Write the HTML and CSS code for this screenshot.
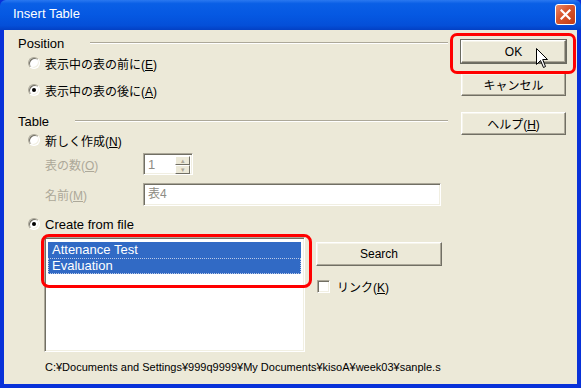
FILE: index.html
```html
<!DOCTYPE html>
<html lang="ja">
<head>
    <meta charset="UTF-8">
    <title>Insert Table</title>
    <link rel="stylesheet" href="styles.css">
</head>
<body>
    <div class="window">
        <div class="titlebar">
            <span class="title">Insert Table</span>
            <span class="close">
                <svg width="11" height="11" viewBox="0 0 11 11"><path d="M1.5 1.5 L9.5 9.5 M9.5 1.5 L1.5 9.5" stroke="#fff" stroke-width="2.2" stroke-linecap="square"/></svg>
            </span>
        </div>
        <div class="client">
            <div class="form">
                <div class="group-head"><span>Position</span><span class="rule"></span></div>
                <div class="option opt-before"><span class="radio"></span><span class="ja">表示中の表の前に(<u>E</u>)</span></div>
                <div class="option opt-after"><span class="radio checked"></span><span class="ja">表示中の表の後に(<u>A</u>)</span></div>

                <div class="group-head head-table"><span>Table</span><span class="rule"></span></div>
                <div class="option opt-new"><span class="radio"></span><span class="ja">新しく作成(<u>N</u>)</span></div>
                <div class="field field-count">
                    <span class="field-label ja">表の数(<u>O</u>)</span>
                    <div class="spin">
                        <span class="spin-value">1</span>
                        <span class="spin-buttons">
                            <span class="spin-btn">&#9652;</span>
                            <span class="spin-btn">&#9662;</span>
                        </span>
                    </div>
                </div>
                <div class="field field-name">
                    <span class="field-label ja">名前(<u>M</u>)</span>
                    <div class="textbox ja">表4</div>
                </div>
                <div class="option opt-file"><span class="radio checked"></span><span>Create from file</span></div>

                <div class="file-row">
                    <div class="listbox">
                        <div class="list-item selected">Attenance Test</div>
                        <div class="list-item selected focused">Evaluation</div>
                    </div>
                    <div class="file-side">
                        <button class="btn btn-search">Search</button>
                        <div class="check-row"><span class="checkbox"></span><span class="ja">リンク(<u>K</u>)</span></div>
                    </div>
                </div>
                <div class="path">C:¥Documents and Settings¥999q9999¥My Documents¥kisoA¥week03¥sanple.s</div>
            </div>

            <div class="actions">
                <button class="btn btn-ok">OK</button>
                <button class="btn btn-cancel ja">キャンセル</button>
                <button class="btn btn-help ja">ヘルプ(<u>H</u>)</button>
            </div>
        </div>

        <!-- red annotation marks -->
        <div class="mark mark-ok"></div>
        <div class="mark mark-list"></div>
        <svg class="cursor" width="13" height="21" viewBox="0 0 13 21">
            <path d="M0.5 0.5 L0.5 16.5 L4.5 12.5 L7.5 19.5 L9.5 18.5 L6.7 11.5 L11.5 11.5 Z" fill="#fff" stroke="#000" stroke-width="1" stroke-linejoin="miter"/>
        </svg>
    </div>
</body>
</html>
```

FILE: styles.css
```css
body {
    margin: 0;
    font-family: 'Liberation Sans', 'Noto Sans CJK JP', sans-serif;
    font-size: 13px;
    color: #000;
}
.window {
    position: relative;
    width: 581px;
    height: 388px;
    background: #0831d9;
    overflow: hidden;
}
.titlebar {
    height: 30px;
    display: flex;
    align-items: center;
    justify-content: space-between;
    background: linear-gradient(#2a78f0 0%, #0a5fe6 12%, #0558e2 50%, #044fd8 85%, #0340c4 100%);
    border-radius: 6px 6px 0 0;
}
.title {
    color: #fff;
    font-size: 13px;
    padding-left: 13px;
    margin-top: -3px;
}
.close {
    width: 19px;
    height: 19px;
    margin-right: 5px;
    margin-top: -1px;
    border: 1px solid #fff;
    border-radius: 3px;
    background: linear-gradient(135deg, #e88a6c 0%, #d9572f 40%, #c13b14 100%);
    display: flex;
    align-items: center;
    justify-content: center;
}
.client {
    height: 354px;
    margin: 0 4px;
    background: #ece9d8;
    display: flex;
}
.ja {
    font-size: 12px;
}
u {
    text-decoration: underline;
}

/* left column */
.form {
    width: 430px;
    padding: 5px 0 0 14px;
}
.group-head {
    display: flex;
    align-items: center;
    height: 16px;
}
.rule {
    flex: 1;
    margin-left: 26px;
    border-top: 1px solid #aca899;
    border-bottom: 1px solid #fff;
}
.head-table {
    margin-top: 15px;
}
.option {
    display: flex;
    align-items: center;
    height: 16px;
    padding-left: 10px;
}
.opt-before { margin-top: 4px; }
.opt-after { margin-top: 11px; }
.opt-new { margin-top: 3px; }
.opt-file { margin-top: 10px; }
.radio {
    position: relative;
    box-sizing: border-box;
    width: 12px;
    height: 12px;
    margin-right: 5px;
    border-radius: 50%;
    background: #fff;
    border: 1px solid;
    border-color: #aca899 #fff #fff #aca899;
    box-shadow: inset 1px 1px #716f64, inset -1px -1px #f1efe2;
}
.radio.checked::after {
    content: '';
    position: absolute;
    left: 3px;
    top: 3px;
    width: 4px;
    height: 4px;
    border-radius: 50%;
    background: #000;
}
.field {
    display: flex;
    align-items: center;
    padding-left: 27px;
}
.field-count { margin-top: 5px; }
.field-name { margin-top: 8px; }
.field-label {
    width: 98px;
    color: #aca899;
}
.spin, .textbox {
    box-sizing: border-box;
    background: #fff;
    border: 1px solid;
    border-color: #aca899 #fff #fff #aca899;
    box-shadow: inset 1px 1px #716f64, inset -1px -1px #f1efe2;
    color: #8e8c84;
}
.spin {
    width: 50px;
    height: 22px;
    display: flex;
    justify-content: space-between;
    padding: 2px 2px 2px 4px;
}
.spin-value {
    font-size: 13px;
    line-height: 18px;
}
.spin-buttons {
    display: flex;
    flex-direction: column;
    width: 15px;
}
.spin-btn {
    flex: 1;
    box-sizing: border-box;
    background: #ece9d8;
    border: 1px solid;
    border-color: #fff #716f64 #716f64 #fff;
    color: #aca899;
    font-size: 7px;
    line-height: 7px;
    text-align: center;
}
.textbox {
    width: 298px;
    height: 23px;
    padding-left: 4px;
    line-height: 21px;
}

/* file list */
.file-row {
    display: flex;
    margin-top: 5px;
    padding-left: 26px;
}
.listbox {
    box-sizing: border-box;
    width: 261px;
    height: 115px;
    background: #fff;
    border: 1px solid;
    border-color: #aca899 #fff #fff #aca899;
    box-shadow: inset 1px 1px #716f64, inset -1px -1px #f1efe2;
    padding: 4px 3px 0 3px;
}
.list-item {
    height: 16px;
    line-height: 16px;
    padding-left: 4px;
}
.list-item.selected {
    background: #316ac5;
    color: #fff;
}
.list-item.focused {
    outline: 1px dotted #b9c9e8;
    outline-offset: -1px;
}
.file-side {
    margin-left: 11px;
    padding-top: 5px;
}
.btn {
    box-sizing: border-box;
    display: block;
    font-family: inherit;
    background: #ece9d8;
    border: 1px solid;
    border-color: #fff #716f64 #716f64 #fff;
    box-shadow: inset -1px -1px #aca899, inset 1px 1px #f6f4ea;
    padding: 0;
    color: #000;
}
.btn-search {
    width: 126px;
    height: 24px;
    font-size: 12px;
}
.check-row {
    display: flex;
    align-items: center;
    margin-top: 12px;
}
.checkbox {
    box-sizing: border-box;
    width: 13px;
    height: 13px;
    margin: 0 7px 0 1px;
    background: #fff;
    border: 1px solid;
    border-color: #aca899 #fff #fff #aca899;
    box-shadow: inset 1px 1px #716f64, inset -1px -1px #f1efe2;
}
.path {
    margin-top: 7px;
    padding-left: 27px;
    font-size: 11px;
    line-height: 16px;
    white-space: nowrap;
}

/* right column */
.actions {
    width: 105px;
    margin-left: 13px;
    padding-top: 10px;
}
.actions .btn {
    width: 105px;
    height: 23px;
}
.btn-ok {
    font-size: 12px;
    outline: 1px solid #6a6a60;
}
.btn-cancel { margin-top: 10px; }
.btn-help { margin-top: 16px; }

/* annotations drawn over the dialog */
.mark {
    position: absolute;
    box-sizing: border-box;
    border: 3px solid #ff0000;
}
.mark-ok {
    left: 450px;
    top: 33px;
    width: 126px;
    height: 41px;
    border-radius: 7px;
}
.mark-list {
    left: 41px;
    top: 234px;
    width: 271px;
    height: 54px;
    border-radius: 8px;
}
.cursor {
    position: absolute;
    left: 536px;
    top: 48px;
}
```
